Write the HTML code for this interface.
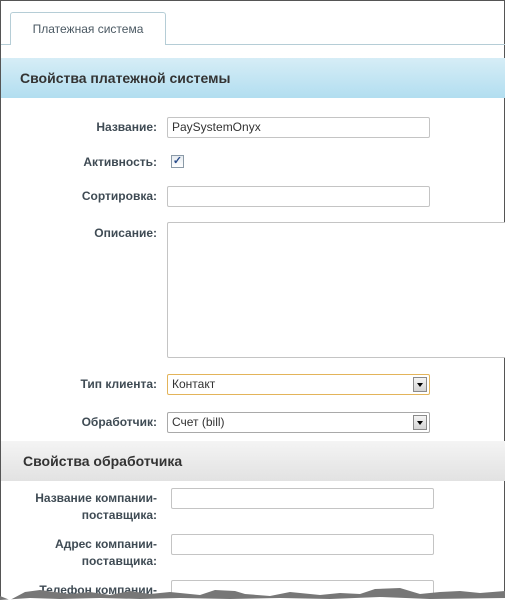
<!DOCTYPE html>
<html><head><meta charset="utf-8"><style>
*{margin:0;padding:0;box-sizing:border-box}
body{width:505px;height:604px;overflow:hidden;background:#fff;font-family:"Liberation Sans",Arial,sans-serif;font-size:12px;color:#3f4b54;position:relative}
.frame{position:absolute;left:0;top:0;width:505px;height:604px;border:1px solid #555;border-bottom:none}
.abs{position:absolute}
.tab{left:10px;top:12px;width:156px;height:33px;border:1px solid #b5cdd6;border-bottom:none;border-radius:3px 3px 0 0;background:#fff;text-align:center;line-height:33px;color:#4b5963;font-size:12px;z-index:2}
.tabline{left:1px;top:44px;width:504px;height:1px;background:#b5cdd6}
.h1{left:1px;top:58px;width:504px;height:40px;background:linear-gradient(#d6edf6,#b2def0);font-weight:bold;font-size:14px;color:#333;line-height:40px;padding-left:19px}
.h2{left:1px;top:441px;width:504px;height:40px;background:linear-gradient(#f4f4f4,#e2e2e2);font-weight:bold;font-size:14px;color:#333;line-height:40px;padding-left:22px}
.lbl{text-align:right;font-weight:bold;font-size:12px;color:#3f4b54}
.inp{border:1px solid #c4c4c4;border-radius:2px;background:#fff;height:21px;font-size:12px;color:#333;line-height:19px;padding-left:4px}
.sel .arr{position:absolute;right:2px;top:2px;width:14px;height:15px;background:linear-gradient(#f4f4f4,#d4d4d4);border:1px solid #8a8a8a}
.sel .arr:after{content:"";position:absolute;left:3px;top:5px;border-left:3px solid transparent;border-right:3px solid transparent;border-top:4px solid #000}
</style></head><body>
<div class="frame"></div>
<div class="abs tabline"></div>
<div class="abs tab">Платежная система</div>
<div class="abs h1">Свойства платежной системы</div>

<div class="abs lbl" style="left:40px;top:120px;width:117px">Название:</div>
<div class="abs inp" style="left:167px;top:117px;width:263px">PaySystemOnyx</div>
<div class="abs lbl" style="left:40px;top:155px;width:117px">Активность:</div>
<div class="abs" style="left:171px;top:155px;width:13px;height:13px;border:1px solid #8b9aa7;background:linear-gradient(#e6ebf0,#fff);color:#2a4c8a;font-size:11px;line-height:11px;text-align:center;font-weight:bold">✓</div>
<div class="abs lbl" style="left:40px;top:189px;width:117px">Сортировка:</div>
<div class="abs inp" style="left:167px;top:186px;width:263px"></div>
<div class="abs lbl" style="left:40px;top:226px;width:117px">Описание:</div>
<div class="abs inp" style="left:167px;top:222px;width:345px;height:136px"></div>

<div class="abs lbl" style="left:40px;top:377px;width:117px">Тип клиента:</div>
<div class="abs inp sel" style="left:167px;top:374px;width:263px;border-color:#e3b45a">Контакт<div class="arr"></div></div>
<div class="abs lbl" style="left:40px;top:415px;width:117px">Обработчик:</div>
<div class="abs inp sel" style="left:167px;top:412px;width:263px;border-color:#a9a9a9">Счет (bill)<div class="arr"></div></div>

<div class="abs h2">Свойства обработчика</div>

<div class="abs lbl" style="left:10px;top:490px;width:147px;line-height:17px">Название компании-<br>поставщика:</div>
<div class="abs inp" style="left:171px;top:488px;width:263px"></div>
<div class="abs lbl" style="left:10px;top:536px;width:147px;line-height:17px">Адрес компании-<br>поставщика:</div>
<div class="abs inp" style="left:171px;top:534px;width:263px"></div>
<div class="abs lbl" style="left:10px;top:582px;width:147px;line-height:17px">Телефон компании-</div>
<div class="abs inp" style="left:171px;top:580px;width:263px"></div>
<svg class="abs" style="left:0;top:586px" width="505" height="18"><path d="M0 18 L0 10 L10 14 L25 6 L40 4 L55 6 L70 8 L90 6 L110 9 L130 5 L150 8 L170 6 L200 9 L215 4 L235 5 L245 8 L270 10 L290 6 L320 9 L340 7 L360 8 L375 3 L400 2 L420 8 L440 6 L460 5 L480 7 L505 5 L505 18 Z" fill="#777"/><path d="M0 18 L0 14 L30 12 L60 13 L100 12 L140 13 L180 12 L230 13 L280 12 L330 13 L380 11 L430 13 L505 12 L505 18 Z" fill="#fff"/></svg>
</body></html>
